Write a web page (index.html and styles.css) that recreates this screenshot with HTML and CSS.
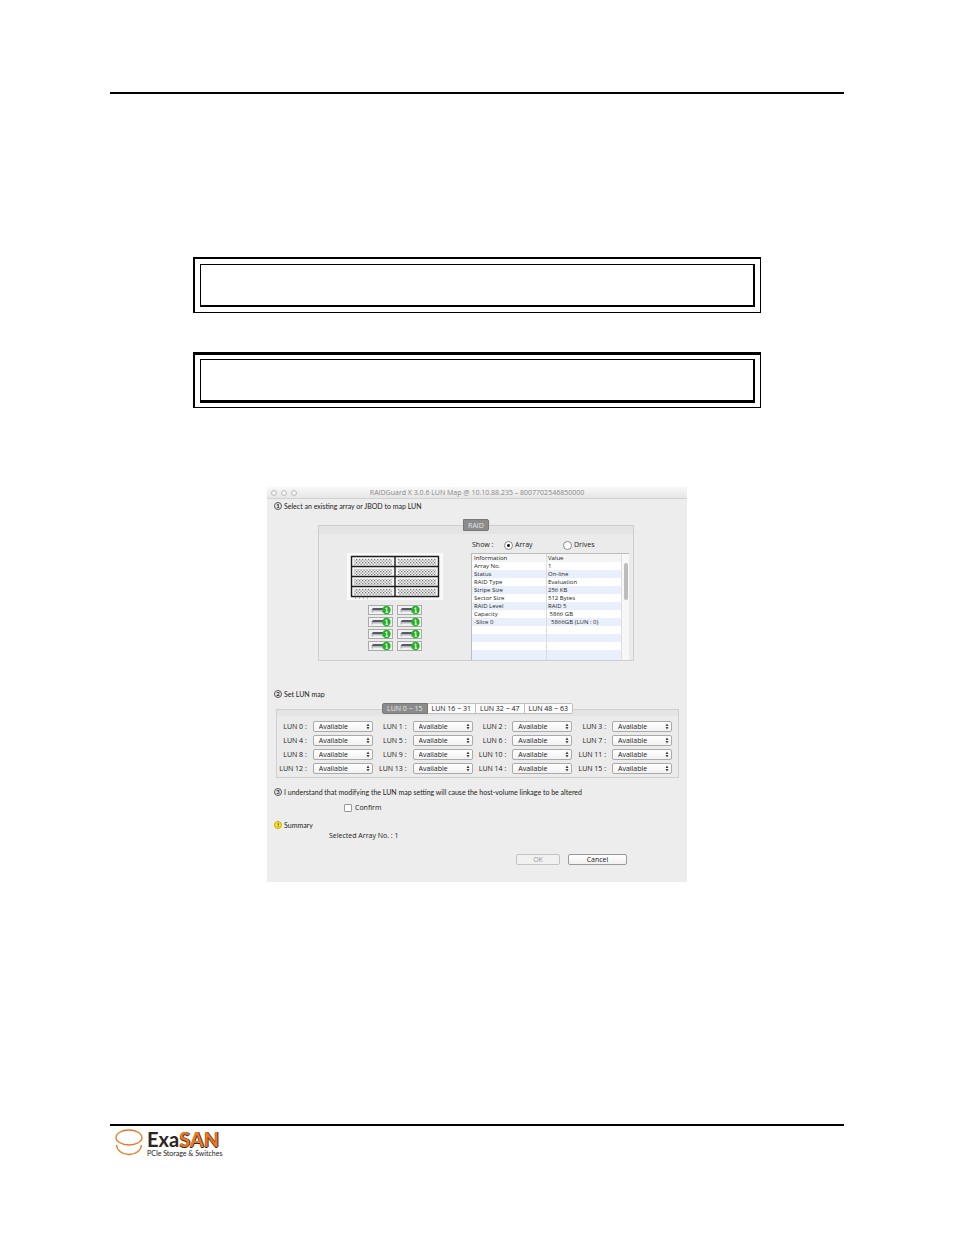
FILE: index.html
```html
<!DOCTYPE html>
<html lang="en">
<head>
<meta charset="utf-8">
<meta name="viewport" content="width=device-width, initial-scale=1">
<title>RAIDGuard X LUN Map</title>
<link rel="stylesheet" href="styles.css">
</head>
<body>
<div class="page">
  <header class="page-header"></header>
  <main class="content">
    <div class="note"><div class="note-inner"></div></div>
    <div class="note note-heavy"><div class="note-inner"></div></div>

    <section class="window" aria-label="LUN Map">
      <div class="titlebar">
        <span class="lights"><i></i><i></i><i></i></span>
        <span class="title">RAIDGuard X 3.0.6 LUN Map @ 10.10.88.235 – 8007702546850000</span>
      </div>

      <h2 class="step"><span class="num">1</span>Select an existing array or JBOD to map LUN</h2>
      <div class="raid">
        <div class="tabs"><button type="button" class="tab tab-on tab-raid">RAID</button></div>
        <div class="panel raid-panel">
          <div class="hardware">
            <svg class="enclosure" viewBox="0 0 96 47" aria-label="Enclosure">
              <defs>
                <pattern id="mesh" width="3" height="3" patternUnits="userSpaceOnUse">
                  <rect width="1.300" height="1.300" fill="#777"/><rect x="1.500" y="1.500" width="1.300" height="1.300" fill="#888"/>
                </pattern>
              </defs>
              <rect width="96" height="47" fill="#f9f9f9"/>
              <rect x="4" y="3" width="88" height="41" fill="#f4f4f4"/>
              <g fill="url(#mesh)">
                <rect x="7" y="6" width="38" height="6"/><rect x="51" y="6" width="38" height="6"/>
                <rect x="7" y="16" width="38" height="6"/><rect x="51" y="16" width="38" height="6"/>
                <rect x="7" y="26" width="38" height="6"/><rect x="51" y="26" width="38" height="6"/>
                <rect x="7" y="36" width="38" height="6"/><rect x="51" y="36" width="38" height="6"/>
              </g>
              <path d="M4 3.500H92M4 13.500H92M4 23.500H92M4 33.500H92M4 43.500H92M4.500 3V44M48 3V44M91.500 3V44" fill="none" stroke="#1c1c1c" stroke-width="1.400"/>
              <path d="M8.500 44v2M12.500 44v2M16.500 44v2M20.500 44v2" stroke="#999" stroke-width=".7"/>
            </svg>
            <div class="drives" id="drives"></div>
          </div>
          <div class="details">
            <div class="show">
              <span class="show-label">Show :</span>
              <label class="option"><input type="radio" name="show" checked>Array</label>
              <label class="option"><input type="radio" name="show">Drives</label>
            </div>
            <div class="table-box">
              <table>
                <thead><tr><th>Information</th><th>Value</th></tr></thead>
                <tbody>
                  <tr><td>Array No.</td><td>1</td></tr>
                  <tr><td>Status</td><td>On-line</td></tr>
                  <tr><td>RAID Type</td><td>Evaluation</td></tr>
                  <tr><td>Stripe Size</td><td>256 KB</td></tr>
                  <tr><td>Sector Size</td><td>512 Bytes</td></tr>
                  <tr><td>RAID Level</td><td>RAID 5</td></tr>
                  <tr><td>Capacity</td><td>&nbsp;5866 GB</td></tr>
                  <tr><td>-Slice 0</td><td>&nbsp;&nbsp;5866GB (LUN : 0)</td></tr>
                  <tr><td></td><td></td></tr>
                  <tr><td></td><td></td></tr>
                  <tr><td></td><td></td></tr>
                  <tr><td></td><td></td></tr>
                </tbody>
              </table>
              <div class="scroll"><div class="thumb"></div></div>
            </div>
          </div>
        </div>
      </div>

      <h2 class="step step-map"><span class="num">2</span>Set LUN map</h2>
      <div class="map">
        <div class="tabs">
          <button type="button" class="tab tab-on">LUN 0 ~ 15</button>
          <button type="button" class="tab">LUN 16 ~ 31</button>
          <button type="button" class="tab">LUN 32 ~ 47</button>
          <button type="button" class="tab">LUN 48 ~ 63</button>
        </div>
        <div class="panel lun-panel"><div class="luns" id="luns"></div></div>
      </div>

      <h2 class="step step-agree"><span class="num">3</span>I understand that modifying the LUN map setting will cause the host-volume linkage to be altered</h2>
      <label class="confirm"><input type="checkbox">Confirm</label>

      <h2 class="step step-summary"><span class="num num-warn">!</span>Summary</h2>
      <p class="selected">Selected Array No. : 1</p>

      <div class="actions">
        <button type="button" class="button button-ok" disabled>OK</button>
        <button type="button" class="button button-cancel">Cancel</button>
      </div>
    </section>
  </main>

  <footer class="page-footer">
    <svg class="mark" viewBox="0 0 30 28" aria-hidden="true">
      <g fill="none" stroke="#ee7420" stroke-width="1.300">
        <ellipse cx="15" cy="8.500" rx="13" ry="7.500"/>
        <path d="M2.500 16C3 21.500 8 25.500 15 25.500S27 21.500 27.500 16"/>
      </g>
    </svg>
    <div class="brand">
      <div class="name">Exa<span class="san">SAN</span></div>
      <div class="tagline">PCIe Storage &amp; Switches</div>
    </div>
  </footer>
</div>
<script src="app.js"></script>
</body>
</html>
```
FILE: styles.css
```css
* { box-sizing: border-box; }
body { margin: 0; background: #fff; color: #222; font-family: "Open Sans", "Noto Sans", sans-serif; }
button, select, input { font: inherit; color: inherit; margin: 0; }

.page { min-height: 100vh; display: flex; flex-direction: column; padding: 92px 110px 78px; }
.page-header { border-top: 2px solid #000; }
.content { display: flex; flex-direction: column; align-items: center; padding-top: 163px; }

.note { width: 100%; max-width: 568px; padding: 5px; border: solid #000; border-width: 2px 1px 1px 2px; }
.note-inner { min-height: 43px; border: solid #000; border-width: 1px 2px 2px 1px; }
.note-heavy { margin-top: 39px; padding-top: 4px; padding-bottom: 4px; border-top-width: 3px; }
.note-heavy .note-inner { min-height: 44px; border-bottom-width: 3px; }

.window {
  width: 100%; max-width: 420px; margin-top: 79px; padding-bottom: 17px;
  background: #ededed; font-size: 6px; line-height: 10px;
}
.titlebar {
  display: flex; align-items: center; height: 12px; padding: 0 4px;
  background: linear-gradient(#f8f8f8, #e6e6e6); border-bottom: 1px solid #d2d2d2; color: #888; font-size: 7px;
}
.lights { display: flex; gap: 4px; }
.lights i { width: 6px; height: 6px; border: 1px solid #bbb; border-radius: 50%; background: #f4f4f4; }
.title { flex: 1; text-align: center; padding-right: 26px; }

.step { display: flex; align-items: center; gap: 2px; margin: 2px 0 0; padding-left: 7px; font-family: "Lato", "Open Sans", sans-serif; font-size: 7px; font-weight: 400; line-height: 10px; }
.num { width: 8px; height: 8px; border: 1px solid #555; border-radius: 50%; font-size: 6px; font-weight: 700; line-height: 6px; text-align: center; }
.num-warn { background: #ffe23a; border-color: #c9a800; }

.panel { border: 1px solid #cfcfcf; background: #ebebeb; }
.tabs { position: relative; display: flex; justify-content: center; }
.tab { height: 11px; padding: 0 4px; border: 1px solid #c0c0c0; border-left-width: 0; background: #fafafa; line-height: 9px; font-size: 7px; }
.tab-on { background: #8b8b8b; border-color: #777; color: #e6e6e6; }

.raid { margin: 8px 53px 0 51px; }
.tab-raid { height: 12px; border-left-width: 1px; border-radius: 2px; }
.raid-panel { display: flex; margin-top: -6px; padding-right: 4px; background: linear-gradient(#e4e4e4 8px, #ebebeb 8px); }
.hardware { flex: 1; display: flex; flex-direction: column; align-items: center; padding-top: 27px; }
.enclosure { width: 96px; height: 47px; }
.drives { display: grid; grid-template-columns: 25px 25px; gap: 2px 4px; margin-top: 5px; }
.drive { display: block; width: 25px; height: 10px; }
.details { width: 158px; padding-top: 14px; }
.show { display: flex; align-items: center; height: 10px; padding-left: 1px; font-size: 7px; }
.show-label { width: 32px; }
.option { display: flex; align-items: center; gap: 2px; width: 59px; }
.option input { appearance: none; width: 9px; height: 9px; border: 1px solid #888; border-radius: 50%; background: #fff; }
.option input:checked { background: radial-gradient(circle, #222 0 1px, #fff 2px); }

.table-box { display: flex; align-items: flex-start; margin-top: 3px; border: solid #bbb; border-width: 1px 0 0 1px; background: #fff; }
table { flex: 1; width: 100%; border-collapse: collapse; table-layout: fixed; }
th, td { height: 8px; padding: 0 2px; font-size: 6px; font-weight: 400; line-height: 8px; text-align: left; white-space: nowrap; }
th { background: #f4f4f4; }
th + th, td + td { border-left: 1px solid #d8dce2; padding-left: 1px; }
tbody tr:nth-child(even) { background: #e9f0fb; }
tbody tr:last-child td { height: 10px; }
.scroll { flex: none; align-self: stretch; width: 8px; border-left: 1px solid #ddd; background: #f7f7f7; padding: 9px 1px 0 2px; }
.thumb { height: 37px; border-radius: 2px; background: #bdbdbd; }

.step-map { margin-top: 28px; }
.map { margin: 4px 8px 0 9px; }
.tab:first-child { border-left-width: 1px; border-radius: 2px 0 0 2px; }
.tab:last-child { border-radius: 0 2px 2px 0; }
.lun-panel { margin-top: -5px; padding: 11px 6px 3px 0; background: linear-gradient(#e5e5e5 6px, #ebebeb 6px); }
.luns { display: grid; grid-template-columns: 24fr 25fr 25fr 25fr; gap: 3px 0; }
.lun { display: flex; align-items: center; justify-content: flex-end; gap: 6px; height: 11px; font-size: 7px; white-space: nowrap; }
.pick { position: relative; display: flex; }
.pick select { appearance: none; width: 60px; height: 11px; padding: 0 0 0 5px; border: 1px solid #aaa; border-radius: 2px; background: linear-gradient(#fff, #f2f2f2); line-height: 9px; }
.arrows { position: absolute; right: 3px; top: 2px; width: 4px; height: 7px; pointer-events: none; }

.step-agree { margin-top: 9px; }
.confirm { display: flex; align-items: center; gap: 3px; width: fit-content; margin: 6px 0 0 77px; font-size: 7px; }
.confirm input { appearance: none; width: 8px; height: 8px; border: 1px solid #999; border-radius: 1px; background: #fff; }
.step-summary { margin-top: 7px; }
.selected { margin: 1px 0 0 62px; font-size: 7px; }
.actions { display: flex; justify-content: flex-end; gap: 8px; margin: 13px 60px 0 0; }
.button { height: 11px; padding: 0; border: 1px solid #999; border-radius: 2px; background: linear-gradient(#fff, #f0f0f0); font-size: 7px; line-height: 9px; }
.button-ok { width: 44px; border-color: #c4c4c4; background: #f1f1f1; color: #999; }
.button-cancel { width: 59px; }

.page-footer { display: flex; gap: 3px; margin-top: auto; padding: 3px 0 0 4px; border-top: 2px solid #000; font-family: "Lato", "Open Sans", sans-serif; }
.mark { width: 30px; height: 28px; }
.name { font-weight: 700; font-size: 20px; line-height: 20px; color: #2b2422; }
.san { color: #f07818; text-shadow: 1px 0 #2b2422, 0 1px #2b2422; }
.tagline { font-size: 7px; line-height: 8px; }
```
FILE: app.js
```js
const drives = document.getElementById("drives");
for (let i = 0; i < 8; i++) {
  drives.insertAdjacentHTML("beforeend", `
    <svg class="drive" viewBox="0 0 25 10">
      <rect x=".5" y=".5" width="24" height="9" fill="#f2f2f2" stroke="#aaa"/>
      <path d="M5 3H16V5H3.500Z" fill="#555a66"/>
      <path d="M3.500 5H16V7.500H14V6.500H5V7.500H3.500Z" fill="#b4b6be"/>
      <circle cx="18.500" cy="5" r="4.200" fill="#22b422"/>
      <path d="M17.300 3.700 18.800 2.800V7.200M17.500 7.200H20" fill="none" stroke="#fff" stroke-width="1"/>
    </svg>`);
}

const luns = document.getElementById("luns");
for (let i = 0; i < 16; i++) {
  luns.insertAdjacentHTML("beforeend", `
    <div class="lun">
      <label for="lun${i}">LUN ${i} :</label>
      <span class="pick">
        <select id="lun${i}"><option>Available</option></select>
        <svg class="arrows" viewBox="0 0 4 7"><path d="M2 .5 3.500 3H.5ZM2 6.500 3.500 4H.5Z" fill="#444"/></svg>
      </span>
    </div>`);
}
```
